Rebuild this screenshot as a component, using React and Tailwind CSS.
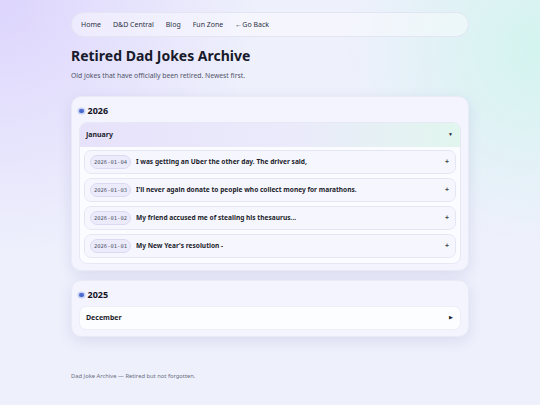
import { useState } from "react";

const sans = "font-['Noto_Sans','Open_Sans',sans-serif]";
const mono = "font-['DejaVu_Sans_Mono','Liberation_Mono',monospace]";

const navLinks = ["Home", "D&D Central", "Blog", "Fun Zone", "←Go Back"];

const archive = [
    {
        year: "2026",
        months: [
            {
                name: "January",
                open: true,
                jokes: [
                    { date: "2026-01-04", text: "I was getting an Uber the other day. The driver said," },
                    { date: "2026-01-03", text: "I'll never again donate to people who collect money for marathons." },
                    { date: "2026-01-02", text: "My friend accused me of stealing his thesaurus..." },
                    { date: "2026-01-01", text: "My New Year's resolution -" },
                ],
            },
        ],
    },
    {
        year: "2025",
        months: [{ name: "December", open: false, jokes: [] }],
    },
];

function JokeRow({ joke }) {
    return (
        <div className="h-[24px] flex items-center pl-[5px] pr-[6px] rounded-[7px] border border-[#e4e6f4] bg-[#f6f7fe]">
            <span className={`${mono} h-[14px] w-[41px] flex items-center justify-center rounded-full border border-[#dcdaf2] bg-[#ecebfb] text-[5.5px] text-[#555a6e]`}>
                {joke.date}
            </span>
            <span className="ml-[5px] text-[6.6px] font-bold text-[#1c1d2b] truncate">{joke.text}</span>
            <span className="ml-auto text-[7px] font-bold text-[#3a3c48]">+</span>
        </div>
    );
}

function Month({ month }) {
    const [open, setOpen] = useState(month.open);

    if (!open) {
        return (
            <button
                onClick={() => setOpen(true)}
                className="h-[24px] w-full flex items-center justify-between pl-[6px] pr-[7px] rounded-[7px] border border-[#eceef8] bg-[#fcfdff] text-left"
            >
                <span className="text-[7px] font-bold text-[#1c1d2b]">{month.name}</span>
                <span className="text-[5px] text-[#1c1d2b]">▶</span>
            </button>
        );
    }

    return (
        <div className="rounded-[8px] border border-[#e6e8f6] overflow-hidden bg-[#fbfcff]">
            <button
                onClick={() => setOpen(false)}
                className="h-[24px] w-full flex items-center justify-between pl-[6px] pr-[7px] bg-[linear-gradient(90deg,#e7e2fb,#ebeafb_55%,#e1f6ee)] text-left"
            >
                <span className="text-[7px] font-bold text-[#1c1d2b]">{month.name}</span>
                <span className="text-[5px] text-[#1c1d2b]">▼</span>
            </button>
            <div className="flex flex-col gap-[4px] px-[4px] pt-[3px] pb-[5px]">
                {month.jokes.map((j) => (
                    <JokeRow key={j.date} joke={j} />
                ))}
            </div>
        </div>
    );
}

function YearCard({ year, months }) {
    return (
        <section className="rounded-[10px] border border-[#e8eaf6] bg-[#f3f4fd] px-[7px] pt-[8px] pb-[6px] shadow-[0_4px_14px_rgba(90,100,160,0.14)]">
            <div className="flex items-center gap-[4px] h-[12px] mb-[5px]">
                <span className="w-[4.5px] h-[4.5px] rounded-full bg-[#4a67cf] shadow-[0_0_0_1.5px_#c9d3f6]" />
                <span className="text-[9px] font-bold text-[#14151f]">{year}</span>
            </div>
            <div className="flex flex-col gap-[4px]">
                {months.map((m) => (
                    <Month key={m.name} month={m} />
                ))}
            </div>
        </section>
    );
}

export default function App() {
    return (
        <div className={`${sans} min-h-[405px] bg-[#eef0fc] bg-[radial-gradient(circle_at_0%_0%,#ddd5fd_0%,rgba(221,213,253,0)_38%),radial-gradient(circle_at_100%_12%,#d3f4ef_0%,rgba(211,244,239,0)_30%)]`}>
            <div className="w-[398px] mx-auto pt-[12px] pb-[24px]">
                <nav className="h-[25px] flex items-center gap-[12px] px-[9px] rounded-full border border-[#e3e5f3] bg-white/40">
                    {navLinks.map((l) => (
                        <a key={l} href="#" className="text-[7px] leading-[12px] pt-[1px] text-[#2e3142]">
                            {l}
                        </a>
                    ))}
                </nav>

                <h1 className="mt-[8px] text-[14px] leading-[22px] font-bold text-[#181a2b]">Retired Dad Jokes Archive</h1>
                <p className="mt-[4px] text-[6.8px] text-[#505466]">Old jokes that have officially been retired. Newest first.</p>

                <div className="mt-[15px] flex flex-col gap-[9px]">
                    {archive.map((y) => (
                        <YearCard key={y.year} {...y} />
                    ))}
                </div>

                <footer className="mt-[35px] text-[5.8px] text-[#6a6e80]">Dad Joke Archive — Retired but not forgotten.</footer>
            </div>
        </div>
    );
}
